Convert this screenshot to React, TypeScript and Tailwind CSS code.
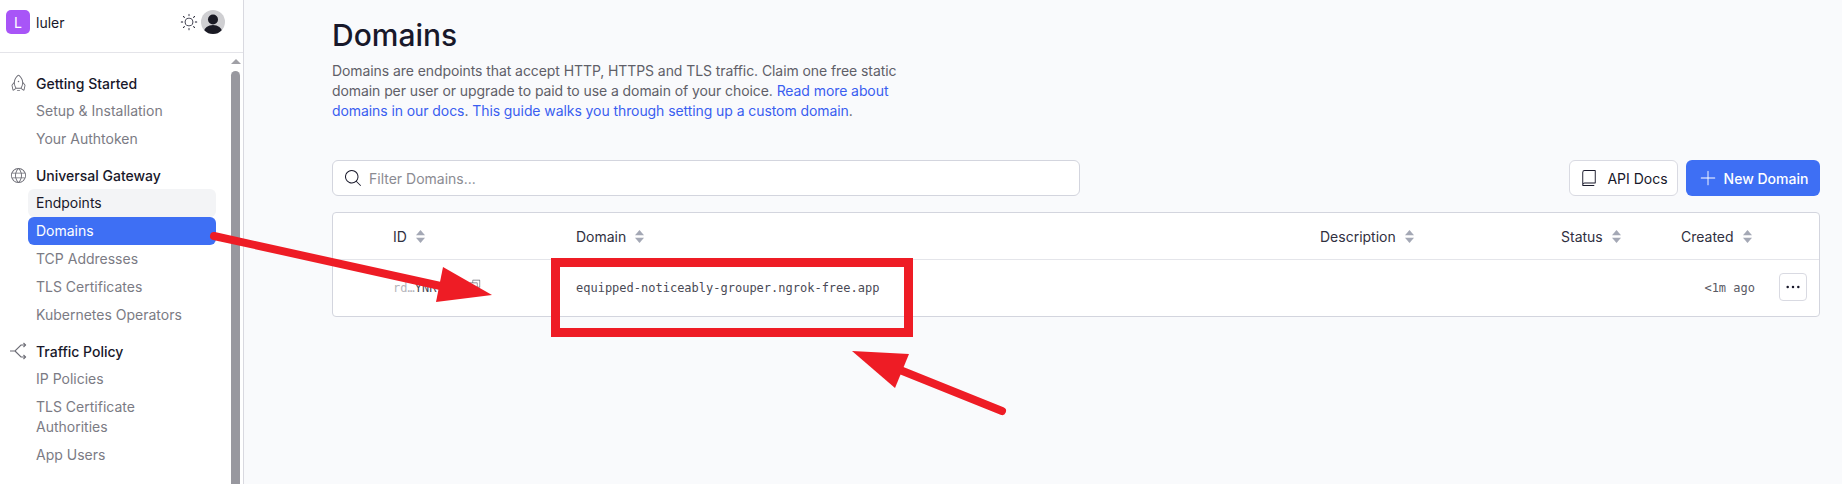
import * as React from "react"
import {
  PiRocketLight,
  PiGlobeLight,
  PiSunLight,
  PiMagnifyingGlassLight,
  PiBookLight,
  PiPlusLight,
  PiDotsThreeBold,
  PiCopyLight,
} from "react-icons/pi"

const SplitIcon = () => (
  <svg width="18" height="18" viewBox="0 0 18 18" fill="none" stroke="#6b6b74" strokeWidth="1.1">
    <path d="M1 9h5l6-6h4.5M6 9l6 6h4.5" />
    <path d="M14.5 1l2 2-2 2M14.5 13l2 2-2 2" />
  </svg>
)

const SortIcon = () => (
  <svg width="9" height="13" viewBox="0 0 9 13" fill="#a4a8b5" className="shrink-0">
    <polygon points="4.5,0 9,5.2 0,5.2" />
    <polygon points="0,7.8 9,7.8 4.5,13" />
  </svg>
)

const Avatar = () => (
  <svg width="24" height="24" viewBox="0 0 24 24" className="shrink-0">
    <clipPath id="avatar-clip">
      <circle cx="12" cy="12" r="12" />
    </clipPath>
    <g clipPath="url(#avatar-clip)">
      <rect width="24" height="24" fill="#cfcfd2" />
      <circle cx="12" cy="9.5" r="5" fill="#1a1a24" />
      <ellipse cx="12" cy="21.5" rx="9" ry="6.5" fill="#1a1a24" />
    </g>
  </svg>
)

const NavHeading = ({ icon, label }: { icon: React.ReactNode; label: string }) => (
  <div className="flex h-7 items-center text-[14px] font-medium text-[#18182a]">
    <span className="flex w-[36px] shrink-0 justify-center">{icon}</span>
    {label}
  </div>
)

const NavItem = ({ label, state }: { label: React.ReactNode; state?: "hover" | "active" }) => {
  const colors =
    state === "active"
      ? "bg-[#3e6ff4] text-white"
      : state === "hover"
        ? "bg-[#f3f4f6] text-[#18182a]"
        : "text-[#7b7b84]"
  return <div className={`ml-7 rounded-[6px] px-2 py-1 text-[14px] leading-5 ${colors}`}>{label}</div>
}

const HeaderCell = ({ label }: { label: string }) => (
  <div className="flex items-center gap-[9px] text-[14px] text-[#30303f]">
    {label}
    <SortIcon />
  </div>
)

const gridCols = "grid grid-cols-[183px_744px_241px_120px_1fr]"

export default function App() {
  return (
    <div
      className="relative flex h-screen w-full overflow-hidden bg-[#f9fafc]"
      style={{ fontFamily: "Inter, 'Noto Sans', sans-serif" }}
    >
      <aside className="flex h-full w-[244px] shrink-0 flex-col border-r border-[#d9d9e0] bg-white">
        <div className="flex h-[53px] shrink-0 items-start border-b border-[#e4e4e9] pl-[6px] pr-[18px] pt-[10px]">
          <div className="flex h-6 w-6 items-center justify-center rounded-[5px] bg-[#a855f7] text-[14px] text-white">L</div>
          <span className="ml-[6px] mt-[2px] text-[14px] text-[#18182a]">luler</span>
          <div className="ml-auto flex items-center gap-[3px]">
            <PiSunLight size={18} color="#18182a" />
            <Avatar />
          </div>
        </div>
        <div className="flex min-h-0 flex-1">
          <nav className="min-w-0 flex-1 pr-[15px] pt-4">
            <NavHeading icon={<PiRocketLight size={19} color="#6b6b74" />} label="Getting Started" />
            <NavItem label="Setup & Installation" />
            <NavItem label="Your Authtoken" />
            <div className="h-2" />
            <NavHeading icon={<PiGlobeLight size={19} color="#6b6b74" />} label="Universal Gateway" />
            <NavItem label="Endpoints" state="hover" />
            <NavItem label="Domains" state="active" />
            <NavItem label="TCP Addresses" />
            <NavItem label="TLS Certificates" />
            <NavItem label="Kubernetes Operators" />
            <div className="h-2" />
            <NavHeading icon={<SplitIcon />} label="Traffic Policy" />
            <NavItem label="IP Policies" />
            <NavItem label={<>TLS Certificate<br />Authorities</>} />
            <NavItem label="App Users" />
          </nav>
          <div className="mr-[3px] flex w-[9px] shrink-0 flex-col items-center">
            <div className="mt-[6px] h-0 w-0 border-x-[5px] border-b-[5px] border-x-transparent border-b-[#a0a0a6]" />
            <div className="mt-[7px] w-[9px] flex-1 rounded-t-[5px] bg-[#98989f]" />
          </div>
        </div>
      </aside>

      <main className="min-w-0 flex-1 pl-[88px] pr-[22px] pt-[17px]">
        <h1 className="text-[30px] font-medium leading-9 text-[#18182a]">Domains</h1>
        <p className="mt-[8px] w-[580px] text-[14px] leading-5 tracking-[-0.08px] text-[#5f5f68]">
          Domains are endpoints that accept HTTP, HTTPS and TLS traffic. Claim one free static domain per user or
          upgrade to paid to use a domain of your choice.{" "}
          <span className="text-[#3a5ef0]">Read more about domains in our docs</span>.{" "}
          <span className="text-[#3a5ef0]">This guide walks you through setting up a custom domain</span>.
        </p>

        <div className="mt-[39px] flex items-center justify-between">
          <div className="flex h-9 w-[748px] items-center rounded-[6px] border border-[#d3d5de] bg-white pl-[10px] text-[14px] text-[#8b8b92]">
            <PiMagnifyingGlassLight size={20} color="#18182a" className="mr-[6px]" />
            Filter Domains...
          </div>
          <div className="flex items-center gap-2">
            <div className="flex h-9 w-[109px] items-center justify-center gap-2 rounded-[6px] border border-[#d9dae2] bg-white text-[14px] text-[#18182a]">
              <PiBookLight size={20} />
              API Docs
            </div>
            <div className="flex h-9 w-[134px] items-center justify-center gap-[6px] rounded-[6px] bg-[#3e6ff4] text-[14px] font-medium text-white">
              <PiPlusLight size={20} />
              New Domain
            </div>
          </div>
        </div>

        <div className="mt-4 rounded-[4px] border border-[#d3d5de] bg-white">
          <div className={`${gridCols} h-[47px] items-center border-b border-[#e4e5ea] pl-[60px]`}>
            <HeaderCell label="ID" />
            <HeaderCell label="Domain" />
            <HeaderCell label="Description" />
            <HeaderCell label="Status" />
            <HeaderCell label="Created" />
          </div>
          <div className={`${gridCols} h-[56px] items-start pl-[60px] pt-[13px]`} style={{ fontFamily: "'DejaVu Sans Mono', monospace" }}>
            <div className="flex items-start pt-[6px] text-[12px] leading-[18px] text-[#4a4a55]">
              <span className="text-[#b5b5bb]">rd…</span>YNR
              <PiCopyLight size={14} className="-mt-[1px] ml-[32px] text-[#6b6b74]" />
            </div>
            <div className="pt-[6px] text-[12px] leading-[18px] text-[#4a4a55]">equipped-noticeably-grouper.ngrok-free.app</div>
            <div />
            <div />
            <div className="flex items-start justify-end gap-6 pr-3">
              <span className="pt-[6px] text-[12px] leading-[18px] text-[#5a5a64]">&lt;1m ago</span>
              <div className="flex h-7 w-7 items-center justify-center rounded-[4px] border border-[#d9dae2]">
                <PiDotsThreeBold size={20} color="#18182a" />
              </div>
            </div>
          </div>
        </div>
      </main>

      {/* annotation layer drawn over the screenshot */}
      <div className="absolute left-[551px] top-[258px] h-[79px] w-[362px] border-[9px] border-[#ee1c25]" />
      <svg className="pointer-events-none absolute inset-0 h-full w-full" viewBox="0 0 1842 484">
        <path d="M214 236 L445 287" stroke="#ee1c25" strokeWidth="8" strokeLinecap="round" />
        <polygon points="492,295 443,267 436,302" fill="#ee1c25" />
        <path d="M1002 411 L900 370" stroke="#ee1c25" strokeWidth="8" strokeLinecap="round" />
        <polygon points="852,351 909,354 895,388" fill="#ee1c25" />
      </svg>
    </div>
  )
}
